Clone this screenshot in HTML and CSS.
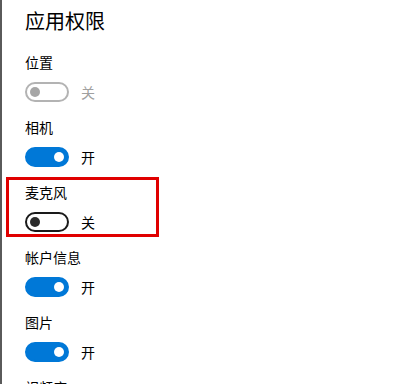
FILE: index.html
```html
<!DOCTYPE html>
<html lang="zh-CN">
<head>
<meta charset="utf-8">
<title>应用权限</title>
<link rel="stylesheet" href="styles.css">
</head>
<body>
<div class="page">
  <h1 class="title">应用权限</h1>

  <div class="setting">
    <div class="label">位置</div>
    <div class="row">
      <span class="toggle disabled"><span class="knob"></span></span>
      <span class="state disabled-text">关</span>
    </div>
  </div>

  <div class="setting">
    <div class="label">相机</div>
    <div class="row">
      <span class="toggle on"><span class="knob"></span></span>
      <span class="state">开</span>
    </div>
  </div>

  <div class="setting highlight">
    <div class="label">麦克风</div>
    <div class="row">
      <span class="toggle off"><span class="knob"></span></span>
      <span class="state">关</span>
    </div>
  </div>

  <div class="setting after-highlight">
    <div class="label">帐户信息</div>
    <div class="row">
      <span class="toggle on"><span class="knob"></span></span>
      <span class="state">开</span>
    </div>
  </div>

  <div class="setting">
    <div class="label">图片</div>
    <div class="row">
      <span class="toggle on"><span class="knob"></span></span>
      <span class="state">开</span>
    </div>
  </div>

  <div class="setting">
    <div class="label">视频库</div>
  </div>
</div>
</body>
</html>
```

FILE: styles.css
```css
* { box-sizing: border-box; }

html, body {
  margin: 0;
  padding: 0;
  background: #ffffff;
  height: 100%;
  overflow: hidden;
}

body {
  font-family: "Noto Sans CJK SC", "Noto Sans", sans-serif;
  color: #000000;
}

.page {
  min-height: 100%;
  border-left: 2px solid #5a5a5a;
  padding-left: 23px;
  padding-top: 7px;
}

.title {
  margin: 0;
  font-size: 20px;
  line-height: 28px;
  font-weight: 400;
}

.setting {
  margin-top: 17px;
}

.title + .setting {
  margin-top: 19px;
}

.label {
  font-size: 14px;
  line-height: 20px;
  height: 20px;
  margin-top: -2px;
}

.row {
  display: flex;
  align-items: center;
  gap: 12px;
  margin-top: 10px;
  height: 20px;
}

.toggle {
  display: flex;
  align-items: center;
  width: 44px;
  height: 20px;
  border-radius: 10px;
  border: 2px solid #000;
  padding: 0 3px;
}

.knob {
  width: 10px;
  height: 10px;
  border-radius: 50%;
  background: #333;
}

.toggle.on {
  background: #0078d7;
  border-color: #0078d7;
  justify-content: flex-end;
}

.toggle.on .knob { background: #ffffff; }

.toggle.off { border-color: #1a1a1a; }
.toggle.off .knob { background: #2b2b2b; }

.toggle.disabled { border-color: #b3b3b3; }
.toggle.disabled .knob { background: #a6a6a6; }

.state {
  font-size: 14px;
  line-height: 20px;
}

.disabled-text { color: #a0a0a0; }

.setting.highlight {
  margin-top: 10px;
  margin-left: -19px;
  width: 153px;
  border: 3px solid #e00000;
  padding: 4px 0 2px 16px;
}

.setting.after-highlight {
  margin-top: 12px;
}
```
